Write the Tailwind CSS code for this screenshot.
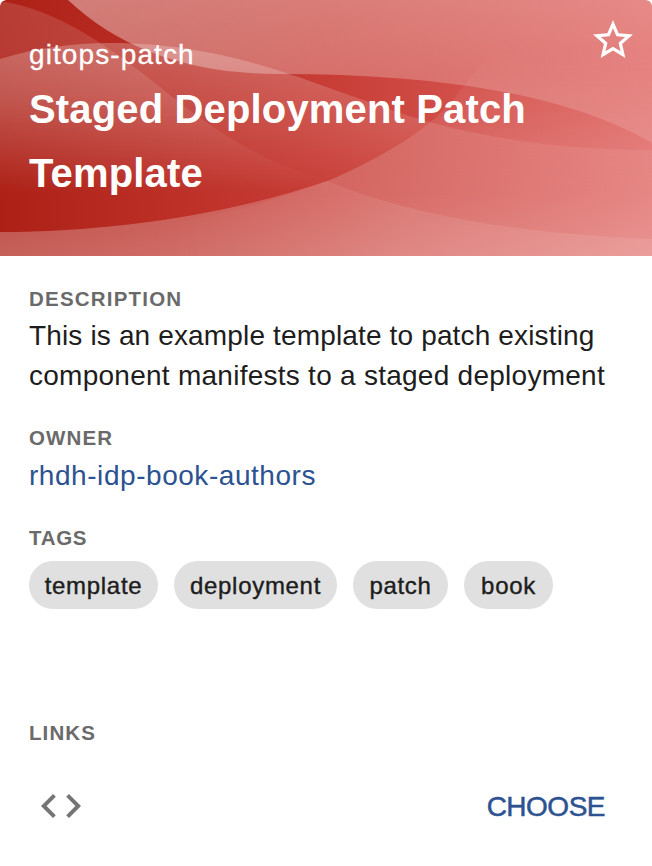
<!DOCTYPE html>
<html lang="en">
<head>
<meta charset="utf-8">
<title>Staged Deployment Patch Template</title>
<script src="https://cdn.jsdelivr.net/npm/@tailwindcss/browser@4"></script>
</head>
<body class="bg-white font-['Liberation_Sans',Arial,sans-serif]">
<article class="flex h-[866px] w-[652px] flex-col overflow-hidden rounded-t-[6px] bg-white text-[#1d1d1d]">
  <header class="relative flex h-64 shrink-0 items-start justify-between overflow-hidden rounded-t-[6px] pl-[29px] pr-[15px] text-white">
    <svg class="absolute inset-0" width="652" height="256" viewBox="0 0 652 256" aria-hidden="true">
      <defs>
        <linearGradient id="base"><stop offset="0" stop-color="#ad2016"/><stop offset=".5" stop-color="#c83d36"/><stop offset="1" stop-color="#e06865"/></linearGradient>
        <linearGradient id="top" gradientUnits="userSpaceOnUse" x1="0" y1="0" x2="0" y2="143"><stop offset="0" stop-color="#fff" stop-opacity=".17"/><stop offset=".52" stop-color="#fff" stop-opacity=".09"/><stop offset="1" stop-color="#fff" stop-opacity=".06"/></linearGradient>
        <linearGradient id="topside" gradientUnits="userSpaceOnUse" x1="80" y1="0" x2="652" y2="0"><stop offset="0" stop-color="#fff" stop-opacity=".28"/><stop offset="1" stop-color="#fff" stop-opacity=".07"/></linearGradient>
        <linearGradient id="left" gradientUnits="userSpaceOnUse" x1="0" y1="0" x2="0" y2="190"><stop offset="0" stop-color="#fff" stop-opacity=".13"/><stop offset=".5" stop-color="#fff" stop-opacity=".11"/><stop offset="1" stop-color="#fff" stop-opacity="0"/></linearGradient>
        <linearGradient id="mid" gradientUnits="userSpaceOnUse" x1="0" y1="43" x2="0" y2="195"><stop offset="0" stop-color="#fff" stop-opacity=".24"/><stop offset="1" stop-color="#fff" stop-opacity="0"/></linearGradient>
        <linearGradient id="low" gradientUnits="userSpaceOnUse" x1="0" y1="50" x2="0" y2="256"><stop offset="0" stop-color="#fff" stop-opacity="0"/><stop offset=".25" stop-color="#fff" stop-opacity=".07"/><stop offset=".65" stop-color="#fff" stop-opacity=".19"/><stop offset="1" stop-color="#fff" stop-opacity=".29"/></linearGradient>
        <linearGradient id="rightlow" gradientUnits="userSpaceOnUse" x1="150" y1="0" x2="400" y2="0"><stop offset="0" stop-color="#fff" stop-opacity="0"/><stop offset="1" stop-color="#fff" stop-opacity=".09"/></linearGradient>
      </defs>
      <path fill="url(#base)" d="M0 0H652V256H0Z"/>
      <path fill="url(#top)" d="M68 0C120 49 190 74 280 74C430 74 565 92 652 143V0Z"/>
      <path fill="url(#topside)" d="M68 0C120 49 190 74 280 74C430 74 565 92 652 143V0Z"/>
      <path fill="url(#left)" d="M0 1C60 10 112 49 160 87C212 130 265 164 330 181V190H0Z"/>
      <path fill="url(#mid)" d="M0 59C36 48 72 43 110 43C225 43 303 80 375 104C460 137 560 150 652 150V195H0Z"/>
      <path fill="url(#low)" d="M0 232C115 232 235 213 330 180C385 156 434 127 459 92C474 72 482 64 495 50H652V256H0Z"/>
      <path fill="url(#rightlow)" d="M327 181C425 221 540 234 652 239V256H150V227C220 217 280 199 327 181Z"/>
    </svg>
    <div class="relative flex flex-col pt-[38px]">
      <p class="whitespace-nowrap text-[28px] leading-[34px] tracking-[1.1px] [-webkit-text-stroke:.3px_white]">gitops-patch</p>
      <h1 class="mt-[5px] whitespace-nowrap text-[40px] font-bold leading-[64px] tracking-[.15px]">Staged Deployment Patch<br>Template</h1>
    </div>
    <button class="relative mt-[16px] size-12" aria-label="Add to favorites">
      <svg width="48" height="48" viewBox="0 0 24 24" fill="currentColor"><path d="m22 9.24-7.19-.62L12 2 9.19 8.63 2 9.24l5.46 4.73L5.82 21 12 17.27 18.18 21l-1.63-7.03L22 9.24zM12 15.4l-3.76 2.27 1-4.28-3.32-2.88 4.38-.38L12 6.1l1.71 4.04 4.38.38-3.32 2.88 1 4.28L12 15.4z"/></svg>
    </button>
  </header>
  <main class="flex flex-col px-[29px] pt-[30px]">
    <h2 class="text-[20.5px] font-bold leading-[26px] tracking-[1.2px] text-[#6a6a6a]">DESCRIPTION</h2>
    <p class="mt-[4px] whitespace-nowrap text-[28px] leading-[40px]"><span class="tracking-[.15px]">This is an example template to patch existing</span><br><span class="tracking-[.26px]">component manifests to a staged deployment</span></p>
    <h2 class="mt-[29px] text-[20.5px] font-bold leading-[26px] tracking-[1.1px] text-[#6a6a6a]">OWNER</h2>
    <a class="mt-[5px] whitespace-nowrap text-[28px] leading-[40px] tracking-[.55px] text-[#2c5291]">rhdh-idp-book-authors</a>
    <h2 class="mt-[29px] text-[20.5px] font-bold leading-[26px] tracking-[.7px] text-[#6a6a6a]">TAGS</h2>
    <div class="mt-[10px] flex gap-4 text-[24px] leading-[50px] tracking-[.7px] [-webkit-text-stroke:.4px_#1d1d1d]">
      <span class="h-12 w-[129px] rounded-full bg-[#e0e0e0] text-center">template</span>
      <span class="h-12 w-[163px] rounded-full bg-[#e0e0e0] text-center">deployment</span>
      <span class="h-12 w-[95px] rounded-full bg-[#e0e0e0] text-center">patch</span>
      <span class="h-12 w-[89px] rounded-full bg-[#e0e0e0] text-center">book</span>
    </div>
    <h2 class="mt-[111px] text-[20.5px] font-bold leading-[26px] tracking-[1.1px] text-[#6a6a6a]">LINKS</h2>
  </main>
  <footer class="mt-[36px] flex items-center justify-between pl-[37px] pr-[47px]">
    <svg width="48" height="48" viewBox="0 0 24 24" fill="#757575"><path d="M9.4 16.6 4.8 12l4.6-4.6L8 6l-6 6 6 6 1.4-1.4zm5.2 0 4.6-4.6-4.6-4.6L16 6l6 6-6 6-1.4-1.4z"/></svg>
    <button class="pt-[2px] text-[28px] leading-[46px] tracking-[-.5px] text-[#2c5291] [-webkit-text-stroke:.5px_#2c5291]">CHOOSE</button>
  </footer>
</article>
</body>
</html>
